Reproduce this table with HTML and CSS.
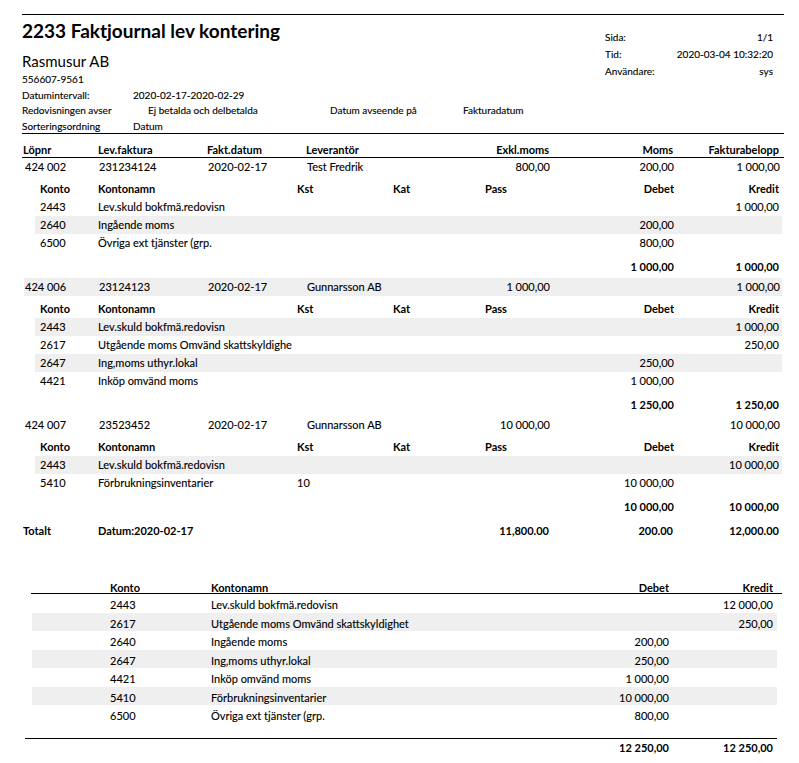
FILE: index.html
```html
<!DOCTYPE html>
<html lang="sv">
<head>
<meta charset="utf-8">
<title>2233 Faktjournal lev kontering</title>
<link rel="stylesheet" href="styles.css">
</head>
<body>
<div class="page">
  <header class="head">
    <div class="head-left">
      <h1 class="title">2233 Faktjournal lev kontering</h1>
      <div class="company">Rasmusur AB</div>
      <div class="meta">
        <div class="meta-row"><span>556607-9561</span></div>
        <div class="meta-row"><span class="ml">Datumintervall:</span><span>2020-02-17-2020-02-29</span></div>
        <div class="meta-row"><span class="ml ml-wide">Redovisningen avser</span><span class="mv-wide">Ej betalda och delbetalda</span><span class="ml2">Datum avseende på</span><span>Fakturadatum</span></div>
        <div class="meta-row"><span class="ml">Sorteringsordning</span><span>Datum</span></div>
      </div>
    </div>
    <div class="head-right">
      <span>Sida:</span><span class="r">1/1</span>
      <span>Tid:</span><span class="r">2020-03-04 10:32:20</span>
      <span>Användare:</span><span class="r">sys</span>
    </div>
  </header>

  <div class="mrow mhead">
    <span>Löpnr</span><span>Lev.faktura</span><span>Fakt.datum</span><span>Leverantör</span><span></span><span class="r">Exkl.moms</span><span class="r">Moms</span><span class="r">Fakturabelopp</span>
  </div>

  <section class="grp">
    <div class="grow">
      <span>424 002</span><span>231234124</span><span>2020-02-17</span><span>Test Fredrik</span><span class="r">800,00</span><span class="r">200,00</span><span class="r">1 000,00</span>
    </div>
    <div class="srow shead"><span>Konto</span><span>Kontonamn</span><span>Kst</span><span>Kat</span><span>Pass</span><span class="r">Debet</span><span class="r">Kredit</span></div>
    <div class="srow"><span>2443</span><span>Lev.skuld bokfmä.redovisn</span><span></span><span></span><span></span><span class="r"></span><span class="r">1 000,00</span></div>
    <div class="srow band"><span>2640</span><span>Ingående moms</span><span></span><span></span><span></span><span class="r">200,00</span><span class="r"></span></div>
    <div class="srow"><span>6500</span><span>Övriga ext tjänster (grp.</span><span></span><span></span><span></span><span class="r">800,00</span><span class="r"></span></div>
    <div class="srow stot"><span></span><span></span><span></span><span></span><span></span><span class="r">1 000,00</span><span class="r">1 000,00</span></div>
  </section>

  <section class="grp">
    <div class="grow band">
      <span>424 006</span><span>23124123</span><span>2020-02-17</span><span>Gunnarsson AB</span><span class="r">1 000,00</span><span class="r"></span><span class="r">1 000,00</span>
    </div>
    <div class="srow shead"><span>Konto</span><span>Kontonamn</span><span>Kst</span><span>Kat</span><span>Pass</span><span class="r">Debet</span><span class="r">Kredit</span></div>
    <div class="srow band"><span>2443</span><span>Lev.skuld bokfmä.redovisn</span><span></span><span></span><span></span><span class="r"></span><span class="r">1 000,00</span></div>
    <div class="srow"><span>2617</span><span>Utgående moms Omvänd skattskyldighe</span><span></span><span></span><span></span><span class="r"></span><span class="r">250,00</span></div>
    <div class="srow band"><span>2647</span><span>Ing,moms uthyr.lokal</span><span></span><span></span><span></span><span class="r">250,00</span><span class="r"></span></div>
    <div class="srow"><span>4421</span><span>Inköp omvänd moms</span><span></span><span></span><span></span><span class="r">1 000,00</span><span class="r"></span></div>
    <div class="srow stot"><span></span><span></span><span></span><span></span><span></span><span class="r">1 250,00</span><span class="r">1 250,00</span></div>
  </section>

  <section class="grp">
    <div class="grow">
      <span>424 007</span><span>23523452</span><span>2020-02-17</span><span>Gunnarsson AB</span><span class="r">10 000,00</span><span class="r"></span><span class="r">10 000,00</span>
    </div>
    <div class="srow shead"><span>Konto</span><span>Kontonamn</span><span>Kst</span><span>Kat</span><span>Pass</span><span class="r">Debet</span><span class="r">Kredit</span></div>
    <div class="srow band"><span>2443</span><span>Lev.skuld bokfmä.redovisn</span><span></span><span></span><span></span><span class="r"></span><span class="r">10 000,00</span></div>
    <div class="srow"><span>5410</span><span>Förbrukningsinventarier</span><span>10</span><span></span><span></span><span class="r">10 000,00</span><span class="r"></span></div>
    <div class="srow stot"><span></span><span></span><span></span><span></span><span></span><span class="r">10 000,00</span><span class="r">10 000,00</span></div>
  </section>

  <div class="mrow mtotal">
    <span>Totalt</span><span class="span3">Datum:2020-02-17</span><span class="r">11,800.00</span><span class="r">200.00</span><span class="r">12,000.00</span>
  </div>

  <section class="summary">
    <div class="sumrow sumhead"><span>Konto</span><span>Kontonamn</span><span class="r">Debet</span><span class="r">Kredit</span></div>
    <div class="sumrow"><span>2443</span><span>Lev.skuld bokfmä.redovisn</span><span class="r"></span><span class="r">12 000,00</span></div>
    <div class="sumrow band"><span>2617</span><span>Utgående moms Omvänd skattskyldighet</span><span class="r"></span><span class="r">250,00</span></div>
    <div class="sumrow"><span>2640</span><span>Ingående moms</span><span class="r">200,00</span><span class="r"></span></div>
    <div class="sumrow band"><span>2647</span><span>Ing,moms uthyr.lokal</span><span class="r">250,00</span><span class="r"></span></div>
    <div class="sumrow"><span>4421</span><span>Inköp omvänd moms</span><span class="r">1 000,00</span><span class="r"></span></div>
    <div class="sumrow band"><span>5410</span><span>Förbrukningsinventarier</span><span class="r">10 000,00</span><span class="r"></span></div>
    <div class="sumrow"><span>6500</span><span>Övriga ext tjänster (grp.</span><span class="r">800,00</span><span class="r"></span></div>
  </section>
  <div class="sumfoot"><span></span><span class="r">12 250,00</span><span class="r">12 250,00</span></div>
</div>
</body>
</html>
```
FILE: styles.css
```css
* { box-sizing: border-box; }
body {
  margin: 0;
  background: #fff;
  color: #000;
  font-family: Lato, "Open Sans", "Liberation Sans", sans-serif;
  font-size: 11px;
  -webkit-text-stroke: 0.12px #000;
}
.page {
  width: 762px;
  margin-left: 22px;
  padding-top: 14px;
}
.r { text-align: right; }
span { white-space: nowrap; overflow: hidden; }

/* header */
.head {
  border-top: 1px solid #000;
  border-bottom: 1px solid #000;
  height: 120px;
  display: flex;
  justify-content: space-between;
}
.title {
  margin: 3px 0 0;
  font-size: 19px;
  font-weight: 700;
  line-height: 26px;
  -webkit-text-stroke: 0;
}
.company {
  margin-top: 8px;
  font-size: 15px;
  line-height: 18px;
  -webkit-text-stroke: 0;
}
.meta {
  margin-top: 2px;
  font-size: 10px;
  line-height: 15.5px;
}
.meta-row { display: flex; }
.ml { width: 111px; }
.ml-wide { width: 126px; }
.mv-wide { width: 182px; }
.ml2 { width: 133px; }
.head-right {
  margin: 14px 11px 0 0;
  width: 168px;
  display: grid;
  grid-template-columns: 1fr auto;
  grid-auto-rows: 17px;
  align-content: start;
  font-size: 10px;
  line-height: 17px;
}

/* main table */
.mrow {
  display: grid;
  grid-template-columns: 75px 109px 99px 146px 0 97px 124px 106px;
  padding-left: 1px;
  padding-right: 5px;
}
.mhead {
  margin-top: 8px;
  line-height: 15px;
  border-bottom: 1px solid #000;
  font-weight: 700;
  -webkit-text-stroke: 0;
}
.grow {
  display: grid;
  grid-template-columns: 74px 109px 99px 146px 97px 124px 106px;
  margin: 0 2px;
  padding: 0 3px 0 1px;
  height: 18px;
  line-height: 18px;
}
.band { background: #efefef; }
.srow {
  display: grid;
  grid-template-columns: 58px 199px 96px 92px 90px 99px 105px;
  margin-left: 13px;
  margin-right: 2px;
  padding: 0 3px 0 5px;
  height: 18px;
  line-height: 18px;
}
.shead {
  margin-top: 3px;
  height: 19px;
  line-height: 19px;
  font-weight: 700;
  -webkit-text-stroke: 0;
}
.stot {
  margin-top: 5px;
  margin-bottom: 1px;
  height: 20px;
  line-height: 20px;
  font-weight: 700;
  -webkit-text-stroke: 0;
}
.mtotal {
  grid-template-columns: 75px 354px 97px 124px 106px;
  margin-top: 5px;
  line-height: 18px;
  font-weight: 700;
  -webkit-text-stroke: 0;
}

/* summary */
.summary {
  margin: 38px 2px 0 9px;
}
.sumrow {
  display: grid;
  grid-template-columns: 101px 358px 100px 104px;
  margin: 0 5px 0 1px;
  padding: 3px 4px 0 78px;
  height: 18.5px;
  line-height: 15.5px;
}
.sumhead {
  margin: 0;
  padding: 3px 9px 0 79px;
  height: 16px;
  line-height: 13px;
  border-bottom: 1px solid #000;
  font-weight: 700;
  -webkit-text-stroke: 0;
}
.sumfoot {
  display: grid;
  grid-template-columns: 1fr 100px 104px;
  margin: 14px 7px 0 3px;
  padding-right: 4px;
  border-top: 1px solid #000;
  line-height: 18px;
  font-weight: 700;
  -webkit-text-stroke: 0;
}
```
